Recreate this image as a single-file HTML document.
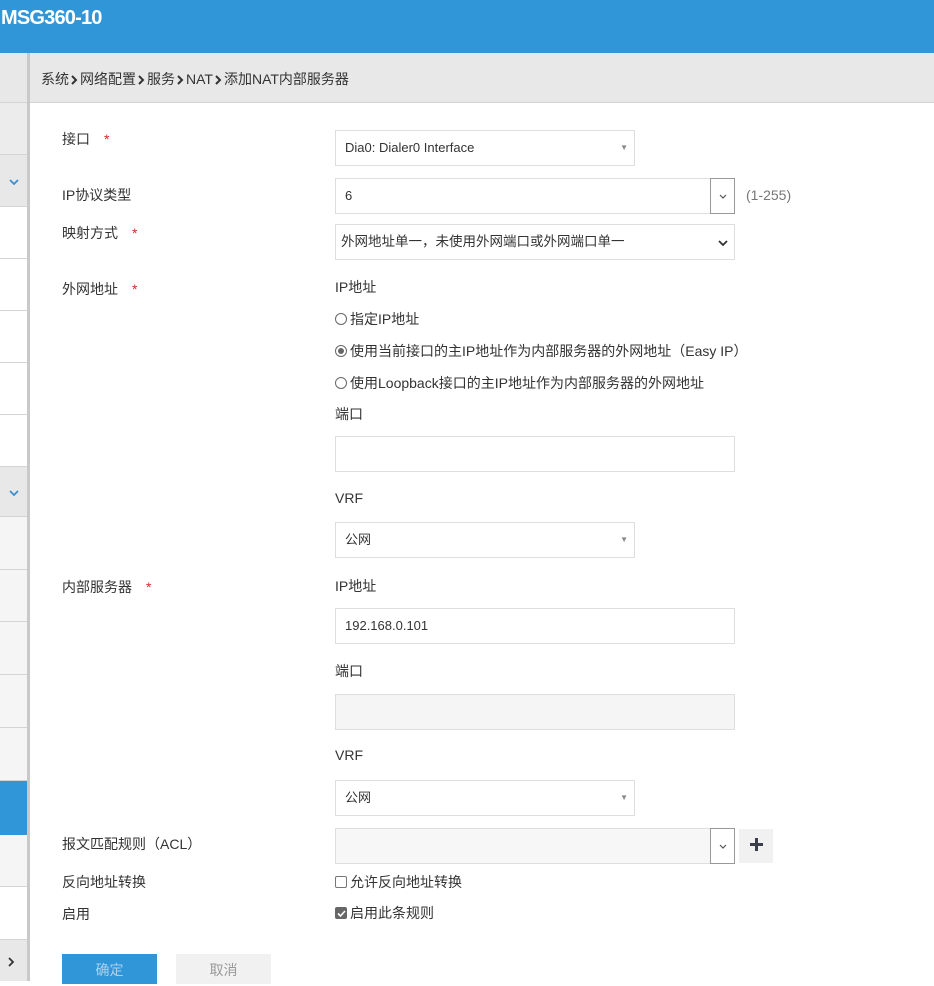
<!DOCTYPE html>
<html><head><meta charset="utf-8"><style>
*{margin:0;padding:0;box-sizing:border-box}
body{width:934px;height:981px;overflow:hidden;background:#fff;font-family:"Liberation Sans","Noto Sans CJK SC",sans-serif;font-size:14px;color:#333;position:relative}
.a{position:absolute}
.hdr{left:0;top:0;width:934px;height:53px;background:#3196d8;color:#fff;font-weight:bold;font-size:20px;padding:7px 0 0 1px;letter-spacing:-0.8px}
.sb{left:0;width:27px;border-bottom:1px solid #d4d4d4}
.chev{color:#3a8fcf;font-size:12px;text-align:center;width:27px}
.vline{left:27px;top:53px;width:3px;height:928px;background:#c9c9c9}
.bc{left:30px;top:53px;width:904px;height:50px;background:#e8e8e8;border-bottom:1px solid #d2d2d2;padding:16px 0 0 11px;font-size:14px;color:#333}
.bc svg{margin:0 2px 0 2px;vertical-align:-1px}
.lbl{left:62px;font-size:14px}
.star{color:#d9262a;margin-left:14px}
.box{left:335px;border:1px solid #dedede;background:#fff;padding-left:9px;font-size:13px;line-height:34px;height:36px}
.tri{position:absolute;right:6px;top:0;font-size:8px;color:#888}
.dd{position:absolute;right:-1px;top:-1px;width:25px;height:36px;border:1px solid #999;background:#fff;text-align:center;font-size:11px;color:#555;line-height:34px}
.radio{display:inline-block;width:12px;height:12px;border:1px solid #666;border-radius:50%;vertical-align:-1px;margin-right:3px;position:relative}
.chk{display:inline-block;width:12px;height:12px;border:1px solid #777;border-radius:2px;vertical-align:-1px;margin-right:3px}
</style></head><body>
<div class="a hdr">MSG360-10</div>
<div class="a sb" style="top:53px;height:50px;background:#e8e8e8"></div>
<div class="a sb" style="top:103px;height:52px;background:#ececec"></div>
<div class="a sb chev" style="top:155px;height:52px;background:#e8e8e8;line-height:52px"><svg width="10" height="6" viewBox="0 0 10 6"><path d="M1 1l4 4 4-4" stroke="#3a8fcf" stroke-width="1.8" fill="none"/></svg></div>
<div class="a sb" style="top:207px;height:52px;background:#fff"></div>
<div class="a sb" style="top:259px;height:52px;background:#fff"></div>
<div class="a sb" style="top:311px;height:52px;background:#fff"></div>
<div class="a sb" style="top:363px;height:52px;background:#fff"></div>
<div class="a sb" style="top:415px;height:52px;background:#fff"></div>
<div class="a sb chev" style="top:467px;height:50px;background:#e8e8e8;line-height:50px"><svg width="10" height="6" viewBox="0 0 10 6"><path d="M1 1l4 4 4-4" stroke="#3a8fcf" stroke-width="1.8" fill="none"/></svg></div>
<div class="a sb" style="top:517px;height:53px;background:#f5f5f5"></div>
<div class="a sb" style="top:570px;height:52px;background:#f5f5f5"></div>
<div class="a sb" style="top:622px;height:53px;background:#f5f5f5"></div>
<div class="a sb" style="top:675px;height:53px;background:#f5f5f5"></div>
<div class="a sb" style="top:728px;height:53px;background:#f5f5f5"></div>
<div class="a sb" style="top:781px;height:54px;background:#3196d8;border:none"></div>
<div class="a sb" style="top:835px;height:52px;background:#f5f5f5"></div>
<div class="a sb" style="top:887px;height:53px;background:#fff"></div>
<div class="a sb" style="top:940px;height:41px;background:#e8e8e8;border:none;padding:14px 0 0 8px"><svg width="7" height="10" viewBox="0 0 7 10"><path d="M1 1l4 4-4 4" stroke="#333" stroke-width="1.8" fill="none"/></svg></div>
<div class="a vline"></div>
<div class="a bc">系统<svg width="7" height="10" viewBox="0 0 7 10"><path d="M1 1l4 4-4 4" stroke="#333" stroke-width="2" fill="none"/></svg>网络配置<svg width="7" height="10" viewBox="0 0 7 10"><path d="M1 1l4 4-4 4" stroke="#333" stroke-width="2" fill="none"/></svg>服务<svg width="7" height="10" viewBox="0 0 7 10"><path d="M1 1l4 4-4 4" stroke="#333" stroke-width="2" fill="none"/></svg>NAT<svg width="7" height="10" viewBox="0 0 7 10"><path d="M1 1l4 4-4 4" stroke="#333" stroke-width="2" fill="none"/></svg>添加NAT内部服务器</div>

<div class="a lbl" style="top:129px">接口<span class="star">*</span></div>
<div class="a lbl" style="top:185px">IP协议类型</div>
<div class="a lbl" style="top:223px">映射方式<span class="star">*</span></div>
<div class="a lbl" style="top:279px">外网地址<span class="star">*</span></div>
<div class="a lbl" style="top:577px">内部服务器<span class="star">*</span></div>
<div class="a lbl" style="top:834px">报文匹配规则（ACL）</div>
<div class="a lbl" style="top:872px">反向地址转换</div>
<div class="a lbl" style="top:904px">启用</div>

<div class="a box" style="top:130px;width:300px">Dia0: Dialer0 Interface<span class="tri">▼</span></div>
<div class="a box" style="top:178px;width:400px">6<span class="dd"><svg width="8" height="5" viewBox="0 0 8 5"><path d="M1 1l3 3 3-3" stroke="#555" stroke-width="1.2" fill="none"/></svg></span></div>
<div class="a" style="left:746px;top:187px;color:#777">(1-255)</div>
<div class="a box" style="top:224px;width:400px;padding-left:5px;font-size:13.5px">外网地址单一，未使用外网端口或外网端口单一<span class="a" style="right:6px;top:0"><svg width="10" height="6" viewBox="0 0 10 6"><path d="M1 1l4 4 4-4" stroke="#333" stroke-width="1.8" fill="none"/></svg></span></div>
<div class="a" style="left:335px;top:277px">IP地址</div>
<div class="a" style="left:335px;top:309px"><span class="radio"></span>指定IP地址</div>
<div class="a" style="left:335px;top:341px"><span class="radio"><span class="a" style="left:2px;top:2px;width:6px;height:6px;border-radius:50%;background:#666"></span></span>使用当前接口的主IP地址作为内部服务器的外网地址（Easy IP）</div>
<div class="a" style="left:335px;top:373px"><span class="radio"></span>使用Loopback接口的主IP地址作为内部服务器的外网地址</div>
<div class="a" style="left:335px;top:404px">端口</div>
<div class="a box" style="top:436px;width:400px"></div>
<div class="a" style="left:335px;top:490px">VRF</div>
<div class="a box" style="top:522px;width:300px">公网<span class="tri">▼</span></div>
<div class="a" style="left:335px;top:576px">IP地址</div>
<div class="a box" style="top:608px;width:400px">192.168.0.101</div>
<div class="a" style="left:335px;top:661px">端口</div>
<div class="a box" style="top:694px;width:400px;background:#f5f5f5"></div>
<div class="a" style="left:335px;top:747px">VRF</div>
<div class="a box" style="top:780px;width:300px">公网<span class="tri">▼</span></div>
<div class="a box" style="top:828px;width:400px;background:#f7f7f7"><span class="dd"><svg width="8" height="5" viewBox="0 0 8 5"><path d="M1 1l3 3 3-3" stroke="#555" stroke-width="1.2" fill="none"/></svg></span></div>
<div class="a" style="left:739px;top:829px;width:34px;height:34px;background:#f1f1f1;text-align:center;line-height:34px"><svg width="13" height="13" viewBox="0 0 13 13"><path d="M6.5 0v13M0 6.5h13" stroke="#3a3f4a" stroke-width="3"/></svg></div>
<div class="a" style="left:335px;top:872px"><span class="chk"></span>允许反向地址转换</div>
<div class="a" style="left:335px;top:903px"><span class="chk" style="background:#666;border-color:#666;position:relative"><svg class="a" style="left:1px;top:1px" width="9" height="9" viewBox="0 0 9 9"><path d="M1 4.5l2.5 2.5 4.5-5" stroke="#fff" stroke-width="1.6" fill="none"/></svg></span>启用此条规则</div>
<div class="a" style="left:62px;top:954px;width:95px;height:30px;background:#3196d8;color:#a9d2ef;text-align:center;line-height:32px">确定</div>
<div class="a" style="left:176px;top:954px;width:95px;height:30px;background:#f1f1f1;color:#999;text-align:center;line-height:32px">取消</div>
</body></html>
